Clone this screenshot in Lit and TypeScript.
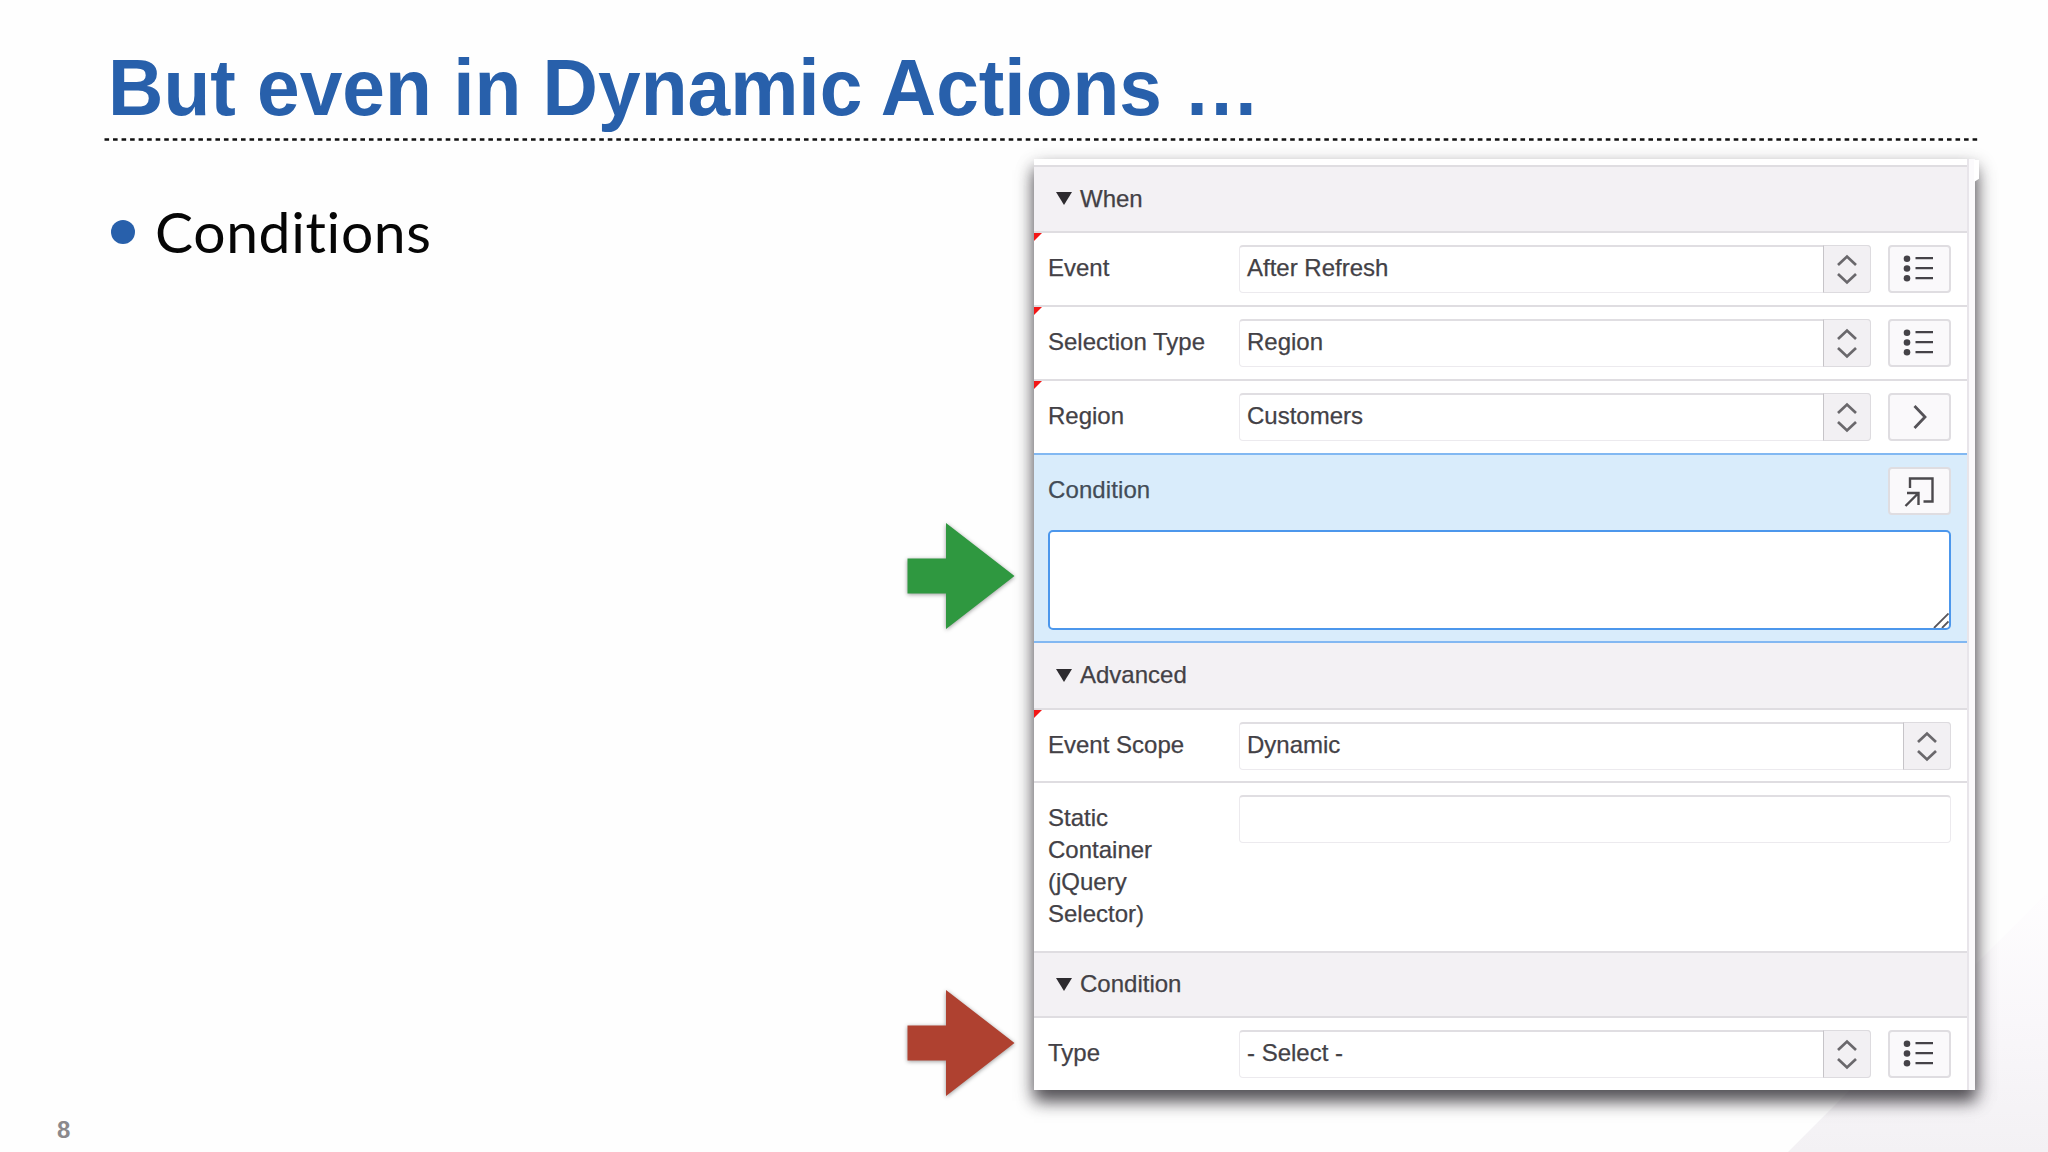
import { LitElement, html, css, svg, nothing } from "lit";
import { customElement, property } from "lit/decorators.js";

type IconName = "list" | "go" | "popup";

const icons = {
  list: svg`
    <g fill="#454348">
      <circle cx="19" cy="13.7" r="3.3"></circle>
      <circle cx="19" cy="23.5" r="3.3"></circle>
      <circle cx="19" cy="33.3" r="3.3"></circle>
    </g>
    <path d="M27.5 13.2H45M27.5 23.2H45M27.5 33.2H45" stroke="#454348" stroke-width="2.2" fill="none"></path>`,
  go: svg`<path d="M26.5 13L37 24L26.5 35" stroke="#555358" stroke-width="2.8" fill="none"></path>`,
  popup: svg`<path d="M22 21V11.500H44.500V34.500H35.500M19 26H30.500V38M30.500 26L17.500 39" stroke="#4b494d" stroke-width="2.4" fill="none"></path>`,
};

@customElement("tool-button")
export class ToolButton extends LitElement {
  @property() icon: IconName = "list";
  static styles = css`
    :host { display: block; }
    .btn {
      box-sizing: border-box; width: 63px; height: 48px; display: block; padding: 0;
      border: 2px solid #dfdde1; border-radius: 4px; background: #faf9fb; overflow: hidden;
    }
    .btn svg { display: block; margin: -2px; }
  `;
  render() {
    return html`<button class="btn" aria-label=${this.icon}>
      <svg width="64" height="48" viewBox="0 0 64 48">${icons[this.icon]}</svg>
    </button>`;
  }
}

@customElement("select-box")
export class SelectBox extends LitElement {
  @property() value = "";
  static styles = css`
    :host { display: block; flex: 1; }
    .box {
      box-sizing: border-box; height: 48px; display: flex; border-radius: 4px;
      border: 1.5px solid #eceaee; border-top: 2px solid #e0dee2; background: #fff;
    }
    .value {
      flex: 1; padding-left: 7px; font: 24px/45px "Liberation Sans", Arial, sans-serif; color: #434146;
      margin-top: -2px; -webkit-text-stroke: 0.25px #434146;
    }
    .spin {
      box-sizing: border-box; width: 48px; height: 48px; margin: -2px -1px -1px 0;
      border: 1.5px solid #dddbdf; border-left-color: #c6c4c8; border-radius: 0 4px 4px 0; background: #f2f0f3;
    }
    .spin svg { display: block; margin: -1px; }
  `;
  render() {
    return html`<div class="box">
      <div class="value">${this.value}</div>
      <div class="spin">
        <svg width="48" height="48" viewBox="0 0 48 48" fill="none" stroke="#6a686c" stroke-width="2.7">
          <path d="M15 20L24 11.5L33 20M15 29L24 37.5L33 29"></path>
        </svg>
      </div>
    </div>`;
  }
}

@customElement("section-header")
export class SectionHeader extends LitElement {
  @property() label = "";
  static styles = css`
    :host {
      display: flex; box-sizing: border-box; align-items: center; height: 67px; padding: 0 0 1px 22px; gap: 8px;
      background: #f3f1f4; border-bottom: 2px solid #dfdde1;
      font: 24px/32px "Liberation Sans", Arial, sans-serif; color: #434146;
      -webkit-text-stroke: 0.25px #434146;
    }
    svg { display: block; }
    .label { display: block; }
  `;
  render() {
    return html`<svg width="16" height="13" viewBox="0 0 16 13"><path d="M0 0H16L8 13Z" fill="#2d2b2f"></path></svg>
      <span class="label">${this.label}</span>`;
  }
}

@customElement("property-row")
export class PropertyRow extends LitElement {
  @property() label = "";
  @property({ type: Boolean }) required = false;
  static styles = css`
    :host {
      display: flex; box-sizing: border-box; height: 74px; padding: 12px 16px 0 14px;
      background: #fff; border-bottom: 2px solid #dfdde1; position: relative;
      font: 24px/32px "Liberation Sans", Arial, sans-serif; color: #434146;
      -webkit-text-stroke: 0.25px #434146;
    }
    .mark {
      position: absolute; left: 0; top: 0; width: 8px; height: 8px; background: #f31616;
      clip-path: polygon(0 0, 100% 0, 0 100%);
    }
    .label { width: 191px; padding-top: 7px; flex: none; }
    .label span { display: block; max-width: 170px; white-space: pre-line; }
    .controls { flex: 1; display: flex; gap: 17px; }
  `;
  render() {
    return html`${this.required ? html`<i class="mark"></i>` : nothing}
      <div class="label"><span>${this.label}</span></div>
      <div class="controls"><slot></slot></div>`;
  }
}

@customElement("app-root")
export class AppRoot extends LitElement {
  static styles = css`
    :host { display: block; }
    .slide {
      position: relative; box-sizing: border-box; width: 2048px; height: 1152px; overflow: hidden;
      background: #fefefe; display: grid; grid-template-rows: 141px 1fr;
      font-family: "Liberation Sans", Arial, sans-serif;
    }
    .wedge {
      position: absolute; right: 0; bottom: 0; width: 260px; height: 260px;
      background: linear-gradient(to bottom, #fefdfe, #f9f7fa 50%, #f3f1f4);
      clip-path: polygon(100% 0, 100% 100%, 0 100%);
    }
    .head { position: relative; padding: 42px 69px 0 104px; display: flex; flex-direction: column; justify-content: space-between; }
    .title {
      margin: 0; padding-left: 4px; height: 92px; font-size: 76.7px; line-height: 92px; font-weight: bold;
      color: #2860ab; white-space: nowrap; transform: scaleY(1.04);
    }
    .rule { display: block; width: 1875px; height: 3px; }
    .body { position: relative; display: grid; grid-template-columns: 1034px 941px; }
    .points { margin: 0; padding: 54px 0 0 111px; list-style: none; }
    .point { display: flex; align-items: center; gap: 20px; height: 72px; }
    .dot { width: 24px; height: 24px; margin-top: 2px; border-radius: 50%; background: #2860ab; }
    .text { font: 57px/72px Lato, "Gill Sans", sans-serif; color: #060606; font-variant-ligatures: none; letter-spacing: 0.65px; }
    .panel {
      margin-top: 18px; height: 931px; box-sizing: border-box; display: grid; grid-template-columns: 933px 8px;
      background: #fdfcfe;
      box-shadow: 0 11px 15px rgba(40, 36, 42, .66), 2px 8px 18px rgba(40, 36, 42, .42);
    }
    .tab { position: absolute; left: 1974px; top: 19px; width: 5px; height: 22px; background: #fff; clip-path: polygon(0 0, 100% 0, 100% 85%, 0 100%); }
    .edge { border-left: 2px solid #e8e5ea; background: #fbfafc; }
    .sheet { padding-top: 6px; background: #fff; min-width: 0; }
    .first { height: 68px; border-top: 2px solid #dfdde1; }
    .flat { height: 72px; border-bottom: 0; }
    .tall { height: 168px; border-bottom: 0; }
    .scope { height: 73px; }
    .mid { border-top: 2px solid #dfdde1; }
    .active {
      box-sizing: border-box; height: 190px; padding: 12px 16px 0 14px;
      border-top: 2px solid #82b8f2; border-bottom: 2px solid #82b8f2; background: #d9ecfb;
    }
    .bar { display: flex; justify-content: space-between; height: 63px; font-size: 24px; line-height: 32px; color: #434c57; -webkit-text-stroke: 0.25px #434c57; }
    .bar span { padding-top: 7px; letter-spacing: 0.1px; }
    .area {
      box-sizing: border-box; height: 100px; border: 2.5px solid #4c97ec; border-radius: 5px; background: #fff;
      display: flex; justify-content: flex-end; align-items: flex-end;
    }
    .input {
      box-sizing: border-box; flex: 1; height: 48px; border: 1.5px solid #eceaee; border-top: 2px solid #e0dee2;
      border-radius: 4px; background: #fff;
    }
    .arrow { position: absolute; left: 904px; filter: drop-shadow(0 1.5px 2px rgba(0, 0, 0, .4)); }
    .green { top: 378px; }
    .red { top: 845px; }
    .page { position: absolute; left: 57px; bottom: 8px; font-size: 24px; line-height: 28px; font-weight: bold; color: #8b898c; }
  `;

  private arrow(name: string, fill: string) {
    return html`<svg class="arrow ${name}" width="114" height="114" viewBox="0 0 114 114">
      <path d="M3.5 39.5H42V4L110.5 57L42 110V74.5H3.5Z" fill=${fill}></path>
    </svg>`;
  }

  render() {
    return html`<main class="slide">
      <div class="wedge"></div>
      <header class="head">
        <h1 class="title">But even in Dynamic Actions …</h1>
        <svg class="rule" viewBox="0 0 1875 3">
          <path d="M0.5 1.5H1874" stroke="#111" stroke-width="2.6" stroke-dasharray="4.6 3.93"></path>
        </svg>
      </header>
      <section class="body">
        <ul class="points">
          <li class="point"><i class="dot"></i><span class="text">Conditions</span></li>
        </ul>
        <div class="panel">
          <div class="sheet">
            <section-header class="first" label="When"></section-header>
            <property-row label="Event" required>
              <select-box value="After Refresh"></select-box><tool-button icon="list"></tool-button>
            </property-row>
            <property-row label="Selection Type" required>
              <select-box value="Region"></select-box><tool-button icon="list"></tool-button>
            </property-row>
            <property-row class="flat" label="Region" required>
              <select-box value="Customers"></select-box><tool-button icon="go"></tool-button>
            </property-row>
            <div class="active">
              <div class="bar"><span>Condition</span><tool-button icon="popup"></tool-button></div>
              <div class="area">
                <svg width="16" height="15" viewBox="0 0 16 15" fill="none" stroke="#58565c" stroke-width="1.8">
                  <path d="M1 15L15.5 0.5M9 15L15.5 8.5"></path>
                </svg>
              </div>
            </div>
            <section-header label="Advanced"></section-header>
            <property-row class="scope" label="Event Scope" required>
              <select-box value="Dynamic"></select-box>
            </property-row>
            <property-row class="tall" label=${"Static\nContainer\n(jQuery\nSelector)"}>
              <div class="input"></div>
            </property-row>
            <section-header class="mid" label="Condition"></section-header>
            <property-row class="flat" label="Type">
              <select-box value="- Select -"></select-box><tool-button icon="list"></tool-button>
            </property-row>
          </div>
          <div class="edge"></div>
        </div>
        <div class="tab"></div>
        ${this.arrow("green", "#2f9840")}
        ${this.arrow("red", "#af4130")}
      </section>
      <footer class="page">8</footer>
    </main>`;
  }
}
